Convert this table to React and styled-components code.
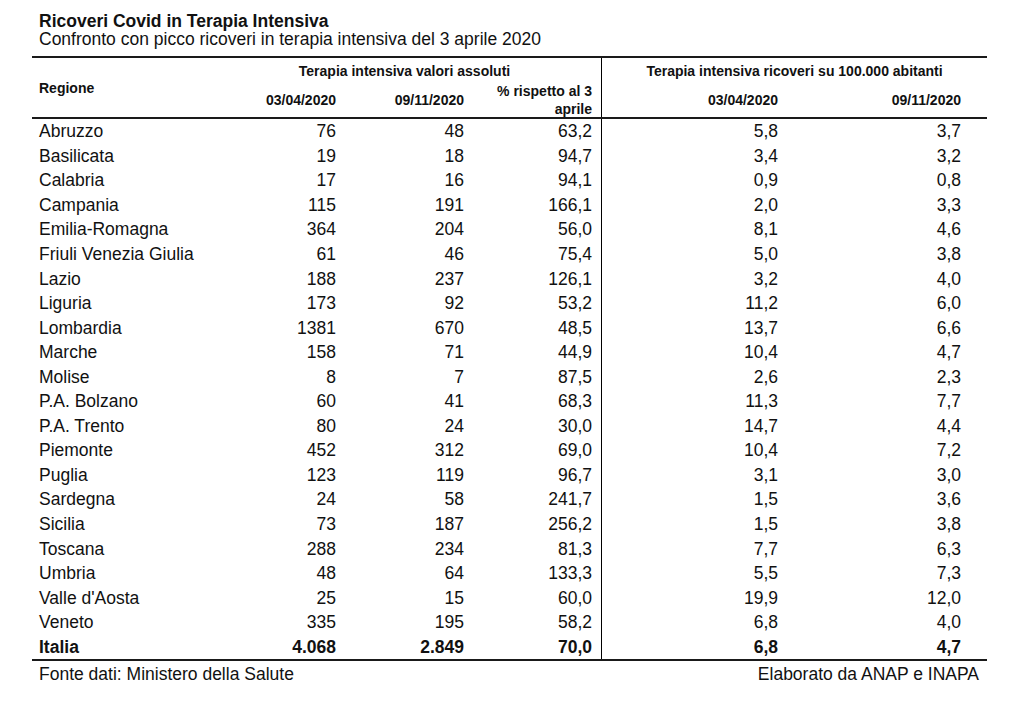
import React from "react";
import styled, { createGlobalStyle } from "styled-components";

const GlobalStyle = createGlobalStyle`
  html, body {
    margin: 0;
    padding: 0;
    background: #ffffff;
  }
  body {
    font-family: "Liberation Sans", Arial, sans-serif;
    color: #111111;
  }
`;

// DATA
const regions = [
  ["Abruzzo", "76", "48", "63,2", "5,8", "3,7"],
  ["Basilicata", "19", "18", "94,7", "3,4", "3,2"],
  ["Calabria", "17", "16", "94,1", "0,9", "0,8"],
  ["Campania", "115", "191", "166,1", "2,0", "3,3"],
  ["Emilia-Romagna", "364", "204", "56,0", "8,1", "4,6"],
  ["Friuli Venezia Giulia", "61", "46", "75,4", "5,0", "3,8"],
  ["Lazio", "188", "237", "126,1", "3,2", "4,0"],
  ["Liguria", "173", "92", "53,2", "11,2", "6,0"],
  ["Lombardia", "1381", "670", "48,5", "13,7", "6,6"],
  ["Marche", "158", "71", "44,9", "10,4", "4,7"],
  ["Molise", "8", "7", "87,5", "2,6", "2,3"],
  ["P.A. Bolzano", "60", "41", "68,3", "11,3", "7,7"],
  ["P.A. Trento", "80", "24", "30,0", "14,7", "4,4"],
  ["Piemonte", "452", "312", "69,0", "10,4", "7,2"],
  ["Puglia", "123", "119", "96,7", "3,1", "3,0"],
  ["Sardegna", "24", "58", "241,7", "1,5", "3,6"],
  ["Sicilia", "73", "187", "256,2", "1,5", "3,8"],
  ["Toscana", "288", "234", "81,3", "7,7", "6,3"],
  ["Umbria", "48", "64", "133,3", "5,5", "7,3"],
  ["Valle d'Aosta", "25", "15", "60,0", "19,9", "12,0"],
  ["Veneto", "335", "195", "58,2", "6,8", "4,0"],
];
const total = ["Italia", "4.068", "2.849", "70,0", "6,8", "4,7"];

// right padding of each numeric column
const pads = [0, 0, 0, 9, 0, 26];
const COLUMNS = "176px 128px 128px 137px 177px 209px";

const App = () => {
  return (
    <>
      <GlobalStyle />
      <Page>
        <Title>Ricoveri Covid in Terapia Intensiva</Title>
        <Subtitle>
          Confronto con picco ricoveri in terapia intensiva del 3 aprile 2020
        </Subtitle>
        <Table>
          <Head>
            <RegionHead>Regione</RegionHead>
            <GroupHead $col="2 / 5">Terapia intensiva valori assoluti</GroupHead>
            <GroupHead $col="5 / 7" $divider>
              Terapia intensiva ricoveri su 100.000 abitanti
            </GroupHead>
            <SubHead $pr={pads[1]}>03/04/2020</SubHead>
            <SubHead $pr={pads[2]}>09/11/2020</SubHead>
            <SubHead $pr={pads[3]}>
              % rispetto al 3
              <br />
              aprile
            </SubHead>
            <SubHead $pr={pads[4]} $divider>
              03/04/2020
            </SubHead>
            <SubHead $pr={pads[5]}>09/11/2020</SubHead>
          </Head>
          {regions.map((r) => (
            <Row key={r[0]}>
              <Name>{r[0]}</Name>
              {r.slice(1).map((v, i) => (
                <Num key={i} $pr={pads[i + 1]} $divider={i === 3}>
                  {v}
                </Num>
              ))}
            </Row>
          ))}
          <Row $bold>
            <Name>{total[0]}</Name>
            {total.slice(1).map((v, i) => (
              <Num key={i} $pr={pads[i + 1]} $divider={i === 3}>
                {v}
              </Num>
            ))}
          </Row>
        </Table>
        <Footer>
          <span>Fonte dati: Ministero della Salute</span>
          <span>Elaborato da ANAP e INAPA</span>
        </Footer>
      </Page>
    </>
  );
};

const Page = styled.div`
  width: 955px;
  padding: 12px 0 0 32px;
`;

const Title = styled.h1`
  margin: 0;
  padding-left: 7px;
  font-size: 17.5px;
  line-height: 18px;
  font-weight: bold;
  color: #111;
`;

const Subtitle = styled.h2`
  margin: 0 0 8px;
  padding-left: 7px;
  font-size: 17.5px;
  line-height: 18px;
  font-weight: normal;
  color: #111;
`;

const Table = styled.div`
  border-top: 2px solid #1a1a1a;
  border-bottom: 2px solid #1a1a1a;
`;

const Head = styled.div`
  display: grid;
  grid-template-columns: ${COLUMNS};
  grid-template-rows: 24px 35px;
  border-bottom: 2px solid #1a1a1a;
  font-size: 14px;
  font-weight: bold;
  line-height: 18px;
`;

const RegionHead = styled.div`
  grid-column: 1;
  grid-row: 1 / 3;
  display: flex;
  align-items: center;
  padding-left: 7px;
`;

const GroupHead = styled.div`
  grid-column: ${(p) => p.$col};
  grid-row: 1;
  display: flex;
  align-items: center;
  justify-content: center;
  padding-top: 2px;
  border-left: ${(p) => (p.$divider ? "1px solid #000" : "none")};
`;

const SubHead = styled.div`
  grid-row: 2;
  display: flex;
  align-items: center;
  justify-content: flex-end;
  text-align: right;
  padding-right: ${(p) => p.$pr}px;
  border-left: ${(p) => (p.$divider ? "1px solid #000" : "none")};
`;

const Row = styled.div`
  display: grid;
  grid-template-columns: ${COLUMNS};
  height: 24.55px;
  font-size: 17.5px;
  font-weight: ${(p) => (p.$bold ? "bold" : "normal")};
`;

const Name = styled.div`
  display: flex;
  align-items: center;
  padding: 1px 0 0 7px;
  white-space: nowrap;
`;

const Num = styled.div`
  display: flex;
  align-items: center;
  justify-content: flex-end;
  padding-top: 1px;
  padding-right: ${(p) => p.$pr}px;
  border-left: ${(p) => (p.$divider ? "1px solid #000" : "none")};
`;

const Footer = styled.div`
  display: flex;
  justify-content: space-between;
  padding: 3px 8px 0 7px;
  font-size: 17.5px;
  line-height: 20px;
`;

export default App;
